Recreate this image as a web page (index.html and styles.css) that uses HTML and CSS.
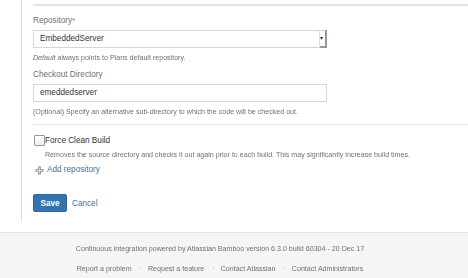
FILE: index.html
```html
<!DOCTYPE html>
<html lang="en">
<head>
    <meta charset="UTF-8">
    <title>Repository settings</title>
    <link rel="stylesheet" href="styles.css">
</head>
<body>
    <div class="page">
        <div class="panel">
            <div class="rule top-rule"></div>

            <div class="field">
                <label class="label">Repository<span class="req">*</span></label>
                <div class="select">
                    <span class="select-text">EmbeddedServer</span>
                    <span class="select-arrow">&#9662;</span>
                </div>
                <div class="desc"><em>Default</em> always points to Plans default repository.</div>
            </div>

            <div class="field">
                <label class="label">Checkout Directory</label>
                <div class="input">emeddedserver</div>
                <div class="desc">(Optional) Specify an alternative sub-directory to which the code will be checked out.</div>
            </div>

            <div class="rule"></div>

            <div class="check-row">
                <span class="checkbox"></span>
                <span class="check-label">Force Clean Build</span>
            </div>
            <div class="desc check-desc">Removes the source directory and checks it out again prior to each build. This may significantly increase build times.</div>

            <a class="add-link" href="#">
                <svg width="9" height="9" viewBox="0 0 9 9">
                    <path d="M3.2 0.5h2.6v2.7h2.7v2.6h-2.7v2.7h-2.6v-2.7h-2.7v-2.6h2.7z" fill="#8a8a8a"/>
                    <path d="M4.5 1.5v6M1.5 4.5h6" stroke="#f2f2f2" stroke-width="0.8"/>
                </svg>
                Add repository
            </a>

            <div class="buttons">
                <button class="save">Save</button>
                <a class="cancel" href="#">Cancel</a>
            </div>
        </div>
    </div>

    <div class="footer">
        <p>Continuous integration powered by Atlassian Bamboo version 6.3.0 build 60304 - 20 Dec 17</p>
        <ul class="footer-links">
            <li>Report a problem</li>
            <li>Request a feature</li>
            <li>Contact Atlassian</li>
            <li>Contact Administrators</li>
        </ul>
    </div>
</body>
</html>
```
FILE: styles.css
```css
body {
    margin: 0;
    font-family: "Liberation Sans", Arial, sans-serif;
    color: #333;
    background: #fff;
}

.page {
    padding-left: 21px;
}

.panel {
    border-left: 1px solid #ddd;
    padding-left: 11px;
    padding-top: 4px;
    height: 217px;
}

.rule {
    height: 1px;
    background: #e6e6e6;
    margin: 0 0 9px;
}

.top-rule {
    height: 2px;
    background: #e3e3e3;
    margin-bottom: 10px;
}

.field {
    margin-bottom: 7px;
}

.label {
    display: block;
    font-size: 8.2px;
    line-height: 10px;
    color: #707070;
    margin-bottom: 4px;
}

.req {
    color: #d04437;
    font-size: 7px;
    vertical-align: top;
}

.select,
.input {
    box-sizing: border-box;
    width: 294px;
    height: 18px;
    border: 1px solid #d6d6d6;
    font-size: 8.2px;
    line-height: 16px;
    padding-left: 6px;
    color: #333;
    position: relative;
}

.select-arrow {
    position: absolute;
    right: -1px;
    top: -1px;
    width: 7px;
    height: 18px;
    border-left: 1px solid #ddd;
    box-shadow: inset -2px -2px 0 #999;
    font-size: 6px;
    line-height: 16px;
    color: #333;
    text-align: left;
}

.desc {
    font-size: 7.1px;
    line-height: 10px;
    color: #707070;
    margin-top: 5px;
    filter: grayscale(1);
}

.check-row {
    display: flex;
    align-items: center;
    height: 12px;
    margin-top: 8px;
    padding-left: 1px;
}

.checkbox {
    box-sizing: border-box;
    width: 11px;
    height: 11px;
    border: 1px solid #999;
    border-radius: 1px;
    background: linear-gradient(#fff, #eee);
}

.check-label {
    font-size: 8.2px;
    color: #333;
}

.check-desc {
    margin-top: 4px;
    padding-left: 12px;
}

.add-link {
    display: flex;
    align-items: center;
    gap: 3px;
    margin-top: 4px;
    padding-left: 2px;
    font-size: 8.2px;
    line-height: 12px;
    color: #3572b0;
    text-decoration: none;
}

.buttons {
    display: flex;
    align-items: center;
    margin-top: 18px;
}

.save {
    width: 34px;
    height: 18px;
    border: 1px solid #2a67a4;
    border-radius: 2px;
    background: #3572b0;
    color: #fff;
    font-family: inherit;
    font-size: 8.2px;
    font-weight: bold;
    padding: 0;
}

.cancel {
    margin-left: 5px;
    font-size: 8.2px;
    color: #3572b0;
    text-decoration: none;
}

.footer {
    margin-top: 11px;
    border-top: 1px solid #e3e3e3;
    background: #f5f5f5;
    height: 46px;
    padding: 11px 28px 0 0;
    text-align: center;
    font-size: 7.1px;
    color: #707070;
    filter: grayscale(1);
}

.footer p {
    margin: 0;
    line-height: 10px;
}

.footer-links {
    list-style: none;
    margin: 10px 0 0;
    padding: 0;
    line-height: 10px;
}

.footer-links li {
    display: inline;
}

.footer-links li + li::before {
    content: "\00b7";
    margin: 0 6px;
    color: #999;
}
```
